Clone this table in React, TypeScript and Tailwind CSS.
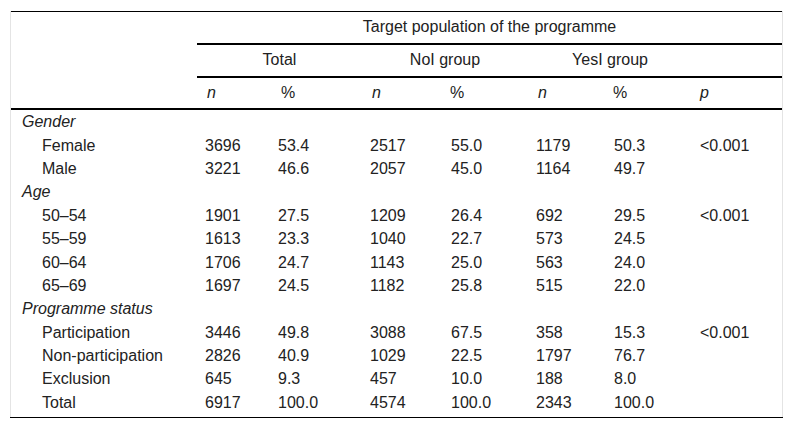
import React from 'react';

type Row = { label: string; cells?: string[]; group?: boolean };

const rows: Row[] = [
  { label: 'Gender', group: true },
  { label: 'Female', cells: ['3696', '53.4', '2517', '55.0', '1179', '50.3', '<0.001'] },
  { label: 'Male', cells: ['3221', '46.6', '2057', '45.0', '1164', '49.7', ''] },
  { label: 'Age', group: true },
  { label: '50–54', cells: ['1901', '27.5', '1209', '26.4', '692', '29.5', '<0.001'] },
  { label: '55–59', cells: ['1613', '23.3', '1040', '22.7', '573', '24.5', ''] },
  { label: '60–64', cells: ['1706', '24.7', '1143', '25.0', '563', '24.0', ''] },
  { label: '65–69', cells: ['1697', '24.5', '1182', '25.8', '515', '22.0', ''] },
  { label: 'Programme status', group: true },
  { label: 'Participation', cells: ['3446', '49.8', '3088', '67.5', '358', '15.3', '<0.001'] },
  { label: 'Non-participation', cells: ['2826', '40.9', '1029', '22.5', '1797', '76.7', ''] },
  { label: 'Exclusion', cells: ['645', '9.3', '457', '10.0', '188', '8.0', ''] },
  { label: 'Total', cells: ['6917', '100.0', '4574', '100.0', '2343', '100.0', ''] },
];

export default function App() {
  return (
    <div className="w-[793px] h-[431px] bg-white pt-[11px] pl-[10px] text-[#222] text-[16px]" style={{ fontFamily: '"Liberation Sans", Arial, sans-serif' }}>
      <div className="w-[773px] border-x border-[#e4e4e4]">
        <table className="table-fixed border-collapse w-[771px]">
          <colgroup>
            <col className="w-[186px]" />
            <col className="w-[73px]" />
            <col className="w-[92px]" />
            <col className="w-[81px]" />
            <col className="w-[85px]" />
            <col className="w-[78px]" />
            <col className="w-[86px]" />
            <col className="w-[90px]" />
          </colgroup>
          <thead>
            <tr className="border-t border-black">
              <th />
              <th colSpan={7} className="h-[32px] font-normal text-center border-b-2 border-black">
                Target population of the programme
              </th>
            </tr>
            <tr>
              <th />
              <th colSpan={2} className="h-[33px] font-normal text-center border-b-2 border-black">Total</th>
              <th colSpan={2} className="font-normal text-center border-b-2 border-black">NoI group</th>
              <th colSpan={2} className="font-normal text-center border-b-2 border-black">YesI group</th>
              <th className="border-b-2 border-black" />
            </tr>
            <tr className="border-b-2 border-black">
              <th />
              <th className="h-[32px] font-normal italic text-left pl-[10px]">n</th>
              <th className="font-normal text-left pl-[11px]">%</th>
              <th className="font-normal italic text-left pl-[10px]">n</th>
              <th className="font-normal text-left pl-[7px]">%</th>
              <th className="font-normal italic text-left pl-[10px]">n</th>
              <th className="font-normal text-left pl-[7px]">%</th>
              <th className="font-normal italic text-left pl-[8px]">p</th>
            </tr>
          </thead>
          <tbody>
            <tr>
              <td colSpan={8} className="h-[2px] p-0" />
            </tr>
            {rows.map((r) =>
              r.group ? (
                <tr key={r.label}>
                  <td colSpan={8} className="h-[23.4px] leading-[20px] pl-[11px] italic">{r.label}</td>
                </tr>
              ) : (
                <tr key={r.label}>
                  <td className="h-[23.4px] leading-[20px] pl-[31px]">{r.label}</td>
                  {r.cells!.map((c, i) => (
                    <td key={i} className="leading-[20px] pl-[8px]">{c}</td>
                  ))}
                </tr>
              )
            )}
            <tr>
              <td colSpan={8} className="h-[2px] p-0" />
            </tr>
          </tbody>
        </table>
      </div>
      <div className="w-[773px] h-px bg-black" />
    </div>
  );
}
